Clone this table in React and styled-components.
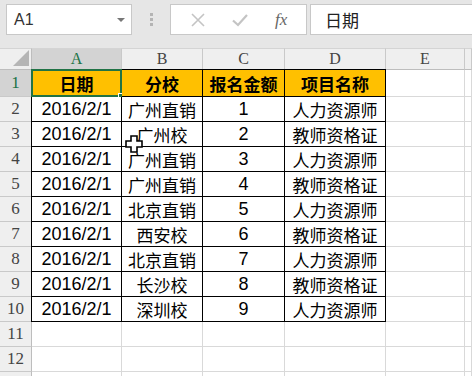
import React from "react";
import styled, { createGlobalStyle } from "styled-components";

const GlobalStyle = createGlobalStyle`
  html, body {
    margin: 0;
    padding: 0;
    width: 472px;
    height: 376px;
    overflow: hidden;
    background: #e6e6e6;
  }
`;

const Window = styled.div`
  width: 472px;
  height: 376px;
  display: flex;
  flex-direction: column;
  font-family: "Liberation Sans", "Noto Sans CJK SC", sans-serif;
`;

const Toolbar = styled.div`
  height: 48px;
  display: flex;
  align-items: flex-start;
  padding: 4px 0 0 6px;
  box-sizing: border-box;
  background: #e6e6e6;
`;

const NameBox = styled.div`
  width: 126px;
  height: 31px;
  box-sizing: border-box;
  background: #fff;
  border: 1px solid #c8c8c8;
  display: flex;
  align-items: center;
  justify-content: space-between;
  padding: 0 6px 0 7px;
  font-size: 16px;
  color: #333;
`;

const Caret = styled.span`
  width: 0;
  height: 0;
  border-left: 4px solid transparent;
  border-right: 4px solid transparent;
  border-top: 4px solid #777;
`;

const Grip = styled.div`
  width: 38px;
  height: 31px;
  display: flex;
  flex-direction: column;
  align-items: center;
  justify-content: center;
  gap: 2px;

  span {
    width: 3px;
    height: 3px;
    background: #b4b4b4;
  }
`;

const FxButtons = styled.div`
  width: 137px;
  height: 31px;
  box-sizing: border-box;
  background: #fff;
  border: 1px solid #c8c8c8;
  display: flex;
  align-items: center;
  justify-content: space-around;
  padding: 0 6px;
`;

const FxLabel = styled.span`
  font-family: "Liberation Serif", serif;
  font-style: italic;
  font-size: 17px;
  color: #666;
`;

const FormulaInput = styled.div`
  flex: 1;
  height: 31px;
  margin-left: 3px;
  box-sizing: border-box;
  background: #fff;
  border: 1px solid #c8c8c8;
  border-right: none;
  display: flex;
  align-items: center;
  padding-left: 14px;
  font-size: 17px;
  color: #222;
`;

const Sheet = styled.div`
  position: relative;
  flex: 1;
  display: grid;
  grid-template-columns: 32px 90px 81px 82px 101px 79px 1fr;
  grid-template-rows: 22px 27px repeat(12, 25px);
  background: #fff;
  overflow: hidden;
`;

const Corner = styled.div`
  background: #efefef;
  border-right: 1px solid #bdbdbd;
  border-bottom: 1px solid #bdbdbd;
  border-top: 1px solid #d4d4d4;
  display: flex;
  align-items: flex-end;
  justify-content: flex-end;
  padding: 0 2px 3px 0;
`;

const ColHead = styled.div`
  background: ${(p) => (p.$active ? "#d3d3d3" : "#efefef")};
  color: ${(p) => (p.$active ? "#217346" : "#444")};
  border-right: 1px solid #c9c9c9;
  border-bottom: 1px solid #bdbdbd;
  border-top: 1px solid #d4d4d4;
  display: flex;
  align-items: center;
  justify-content: center;
  font-family: "Liberation Serif", serif;
  font-size: 16px;
`;

const RowHead = styled.div`
  background: ${(p) => (p.$active ? "#d3d3d3" : "#efefef")};
  color: ${(p) => (p.$active ? "#217346" : "#444")};
  border-right: 1px solid #bdbdbd;
  border-bottom: 1px solid #c9c9c9;
  display: flex;
  align-items: center;
  justify-content: center;
  font-family: "Liberation Serif", serif;
  font-size: 17px;
`;

const Cell = styled.div`
  position: relative;
  box-sizing: border-box;
  display: flex;
  align-items: center;
  justify-content: center;
  white-space: nowrap;
  font-size: ${(p) => (p.$num ? "18px" : "17px")};
  font-weight: ${(p) => (p.$head ? 700 : 400)};
  color: #000;
  background: ${(p) => (p.$head ? "#ffc000" : "#fff")};
  border-right: 1px solid ${(p) => (p.$data ? "#000" : "#d9d9d9")};
  border-bottom: 1px solid ${(p) => (p.$data ? "#000" : "#d9d9d9")};
  box-shadow: ${(p) =>
    [p.$first && "-1px 0 0 #000", p.$head && "0 -1px 0 #000"]
      .filter(Boolean)
      .join(", ") || "none"};
`;

const Selection = styled.div`
  position: absolute;
  top: -1px;
  left: -1px;
  right: -1px;
  bottom: -1px;
  border: 2px solid #217346;
  pointer-events: none;
`;

const Handle = styled.div`
  position: absolute;
  right: -5px;
  bottom: -5px;
  width: 5px;
  height: 5px;
  background: #217346;
  border: 1px solid #fff;
`;

const Cursor = styled.svg`
  position: absolute;
  left: 125px;
  top: 87px;
`;

const heads = ["日期", "分校", "报名金额", "项目名称"];

const rows = [
  ["2016/2/1", "广州直销", "1", "人力资源师"],
  ["2016/2/1", "广州校", "2", "教师资格证"],
  ["2016/2/1", "广州直销", "3", "人力资源师"],
  ["2016/2/1", "广州直销", "4", "教师资格证"],
  ["2016/2/1", "北京直销", "5", "人力资源师"],
  ["2016/2/1", "西安校", "6", "教师资格证"],
  ["2016/2/1", "北京直销", "7", "人力资源师"],
  ["2016/2/1", "长沙校", "8", "教师资格证"],
  ["2016/2/1", "深圳校", "9", "人力资源师"],
];

const cols = ["A", "B", "C", "D", "E", ""];

const App = () => {
  return (
    <Window>
      <GlobalStyle />
      <Toolbar>
        <NameBox>
          A1
          <Caret />
        </NameBox>
        <Grip>
          <span />
          <span />
          <span />
        </Grip>
        <FxButtons>
          <svg width="16" height="16" viewBox="0 0 16 16">
            <path d="M2 2L14 14M14 2L2 14" stroke="#c4c4c4" strokeWidth="1.6" fill="none" />
          </svg>
          <svg width="18" height="16" viewBox="0 0 18 16">
            <path d="M2 8.5L7 13L16 3" stroke="#c4c4c4" strokeWidth="2.2" fill="none" />
          </svg>
          <FxLabel>fx</FxLabel>
        </FxButtons>
        <FormulaInput>日期</FormulaInput>
      </Toolbar>

      <Sheet>
        <Corner>
          <svg width="16" height="16" viewBox="0 0 16 16">
            <path d="M16 0L16 16L0 16Z" fill="#b5b5b5" />
          </svg>
        </Corner>
        {cols.map((c, i) => (
          <ColHead key={"c" + i} $active={c === "A"}>
            {c}
          </ColHead>
        ))}

        <RowHead $active>1</RowHead>
        {heads.map((h, i) => (
          <Cell key={"h" + i} $head $data $first={i === 0}>
            {h}
            {i === 0 && (
              <Selection>
                <Handle />
              </Selection>
            )}
          </Cell>
        ))}
        <Cell />
        <Cell />

        {rows.map((r, ri) => (
          <React.Fragment key={"r" + ri}>
            <RowHead>{ri + 2}</RowHead>
            {r.map((v, ci) => (
              <Cell key={ci} $data $first={ci === 0} $num={ci === 0 || ci === 2}>
                {v}
              </Cell>
            ))}
            <Cell />
            <Cell />
          </React.Fragment>
        ))}

        {[11, 12, 13].map((n) => (
          <React.Fragment key={"e" + n}>
            <RowHead>{n < 13 ? n : ""}</RowHead>
            {cols.map((_, ci) => (
              <Cell key={ci} />
            ))}
          </React.Fragment>
        ))}

        <Cursor width="18" height="18" viewBox="0 0 18 18">
          <path
            d="M6 1H12V6H17V12H12V17H6V12H1V6H6Z"
            fill="#fff"
            stroke="#000"
            strokeWidth="1.6"
            strokeLinejoin="miter"
          />
        </Cursor>
      </Sheet>
    </Window>
  );
};

export default App;
